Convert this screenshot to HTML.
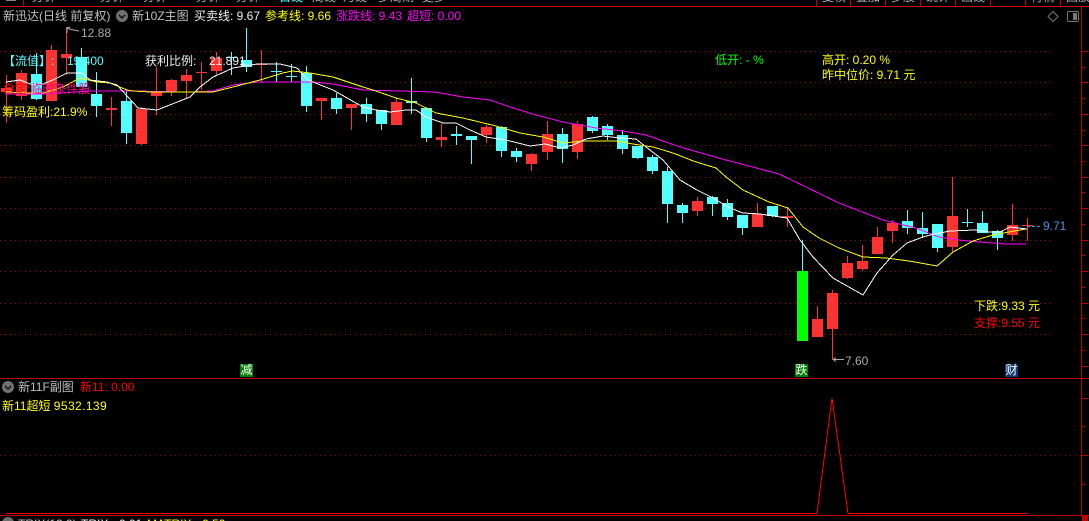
<!DOCTYPE html>
<html><head><meta charset="utf-8"><style>
html,body{margin:0;padding:0;background:#000}
#r{position:relative;width:1089px;height:521px;overflow:hidden;background:#000;font:12px/14px "Liberation Sans","WenQuanYi Zen Hei","Noto Sans CJK SC",sans-serif}
#r svg{position:absolute;left:0;top:0}
.t{position:absolute;white-space:pre;color:#c0c0c0}
.y{color:#ff0}.w{color:#eee}.m{color:#f0f}.c{color:#5ff}.r{color:#f00}.g{color:#0f0}.a{color:#aaa;top:-10px}
.b{position:absolute;width:13px;height:13px;top:364px;color:#fff;text-align:center;line-height:13px}
</style></head><body><div id="r">
<svg width="1089" height="521" viewBox="0 0 1089 521">
<g shape-rendering="crispEdges">
<path d="M0 51.5H1055M0 82.5H1055M0 114.5H1055M0 145.5H1055M0 177.5H1055M0 208.5H1055M0 240.5H1055M0 271.5H1055M0 303.5H1055M0 334.5H1055" stroke="#a01010" stroke-width="1" stroke-dasharray="1 4" fill="none"/>
<path d="M0 455.5H1081" stroke="#801010" stroke-dasharray="1 4" fill="none"/>
<path fill="#ff3232" d="M6 75h1V123h-1zM1 88h11V92H1zM21 70h1V100h-1zM16 73h11V96H16zM51 45h1V101h-1zM46 50h11V101H46zM66 28h1V75h-1zM61 54h11V58H61zM111 97h1V126h-1zM106 108h11V110H106zM141 107h1V145h-1zM136 109h11V144H136zM156 67h1V115h-1zM151 91h11V96H151zM171 79h1V96h-1zM166 80h11V91H166zM186 69h1V98h-1zM181 75h11V81H181zM201 62h1V90h-1zM196 72h11V73H196zM216 52h1V76h-1zM211 58h11V71H211zM261 50h1V82h-1zM256 64h11V65H256zM321 98h1V120h-1zM316 98h11V101H316zM351 104h1V130h-1zM346 104h11V108H346zM396 98h1V125h-1zM391 102h11V125H391zM441 124h1V147h-1zM436 137h11V140H436zM486 125h1V143h-1zM481 127h11V135H481zM531 153h1V171h-1zM526 154h11V164H526zM547 121h1V160h-1zM542 134h11V152H542zM577 121h1V159h-1zM572 124h11V152H572zM697 197h1V216h-1zM692 201h11V211H692zM757 203h1V227h-1zM752 214h11V227H752zM787 208h1V227h-1zM782 216h11V218H782zM817 306h1V337h-1zM812 319h11V337H812zM832 290h1V360h-1zM827 293h11V329H827zM847 256h1V279h-1zM842 263h11V278H842zM862 245h1V271h-1zM857 261h11V269H857zM877 227h1V254h-1zM872 237h11V254H872zM892 220h1V243h-1zM887 223h11V231H887zM952 177h1V253h-1zM947 216h11V247H947zM1012 204h1V241h-1zM1007 225h11V235H1007zM1027 218h1V241h-1zM1022 225h11V226H1022z"/>
<path fill="#54ffff" d="M36 53h1V100h-1zM31 74h11V99H31zM81 48h1V87h-1zM76 57h11V87H76zM96 72h1V117h-1zM91 94h11V106H91zM126 90h1V144h-1zM121 101h11V133H121zM231 52h1V75h-1zM226 57h11V58H226zM246 28h1V72h-1zM241 60h11V67H241zM276 62h1V82h-1zM271 71h11V72H271zM291 64h1V82h-1zM286 76h11V77H286zM306 66h1V112h-1zM301 73h11V106H301zM336 93h1V114h-1zM331 98h11V109H331zM366 98h1V122h-1zM361 104h11V114H361zM381 110h1V130h-1zM376 110h11V124H376zM411 78h1V114h-1zM406 101h11V103H406zM426 107h1V142h-1zM421 108h11V138H421zM456 126h1V145h-1zM451 134h11V136H451zM471 136h1V164h-1zM466 136h11V140H466zM501 126h1V157h-1zM496 127h11V151H496zM516 148h1V162h-1zM511 151h11V157H511zM562 128h1V163h-1zM557 134h11V149H557zM592 116h1V133h-1zM587 117h11V131H587zM607 124h1V140h-1zM602 126h11V135H602zM622 130h1V154h-1zM617 135h11V149H617zM637 146h1V159h-1zM632 146h11V158H632zM652 155h1V174h-1zM647 157h11V171H647zM667 167h1V223h-1zM662 171h11V204H662zM682 203h1V223h-1zM677 205h11V213H677zM712 196h1V216h-1zM707 197h11V204H707zM727 199h1V220h-1zM722 203h11V217H722zM742 215h1V235h-1zM737 215h11V228H737zM772 206h1V217h-1zM767 206h11V216H767zM907 210h1V234h-1zM902 221h11V228H902zM922 212h1V238h-1zM917 228h11V234H917zM937 224h1V252h-1zM932 224h11V248H932zM967 209h1V227h-1zM962 222h11V223H962zM982 211h1V233h-1zM977 223h11V233H977zM997 230h1V250h-1zM992 231h11V238H992zM802 240h1V271h-1z"/>
<rect x="797" y="271" width="11" height="70" fill="#0f0"/>
<polyline fill="none" stroke="#f0f" points="6,94 43,94 90,91 133,91 190,92 213,91 233,85 257,82 293,82 313,82 333,84 363,90 435,92 463,97 490,100 513,108 536,115 563,122 596,128 623,131 646,135 680,147 726,160 779,174 806,187 839,203 883,220 916,228 939,237 959,240 979,242 1006,244 1026,244"/>
<polyline fill="none" stroke="#ff0" points="6,92 30,93 43,93 63,87 80,78 97,82 110,83 127,90 133,91 150,92 213,92 233,87 260,80 283,73 292,71 310,73 333,77 363,87 373,90 396,98 416,103 436,113 463,118 496,126 520,133 543,137 563,143 583,141 616,141 633,144 653,147 673,153 696,162 716,168 726,177 743,190 769,202 788,208 803,227 819,238 839,248 863,257 886,258 909,261 937,266 953,252 973,241 993,235 1009,232 1026,229"/>
<polyline fill="none" stroke="#fff" points="6,82 20,80 33,85 43,84 55,79 67,73 82,73 90,80 107,82 117,85 128,97 138,108 157,110 190,97 200,87 213,77 233,68 257,64 280,64 297,68 308,80 333,90 363,107 376,110 390,112 406,110 416,110 426,117 443,123 456,123 470,130 486,137 506,140 530,146 545,144 560,148 573,145 586,139 603,136 620,138 636,139 646,147 663,160 680,180 697,190 713,198 730,208 743,213 760,214 780,217 787,218 800,240 813,257 833,278 863,295 877,273 893,255 907,243 923,237 930,235 950,231 975,230 990,232 1000,232 1010,227 1027,229"/>
<path fill="#c00000" d="M0 6h1089v1H0zM0 378h1089v1H0zM0 515h1089v1H0zM1081 7h1V515h-1z"/>
<path fill="#c00000" d="M23 0h1v6h-1zM816 0h1v6h-1zM850 0h1v6h-1zM885 0h1v6h-1zM920 0h1v6h-1zM955 0h1v6h-1zM990 0h1v6h-1zM1025 0h1v6h-1zM1060 0h1v6h-1z"/>
<path fill="#888" d="M6 0h10v1H6z"/>
<path fill="#c00000" d="M1082 51h6v1h-6zM1082 82h6v1h-6zM1082 114h6v1h-6zM1082 145h6v1h-6zM1082 177h6v1h-6zM1082 208h6v1h-6zM1082 240h6v1h-6zM1082 271h6v1h-6zM1082 303h6v1h-6zM1082 334h6v1h-6zM1082 67h3v1h-3zM1082 98h3v1h-3zM1082 130h3v1h-3zM1082 161h3v1h-3zM1082 192h3v1h-3zM1082 224h3v1h-3zM1082 255h3v1h-3zM1082 287h3v1h-3zM1082 318h3v1h-3zM1082 350h3v1h-3zM1082 366h6v1h-6zM1082 398h6v1h-6zM1082 455h6v1h-6zM1082 426h3v1h-3zM1082 484h3v1h-3zM1082 515h6v6h-6z"/>
<path d="M6 513.5H817L832 398L848 513.5H1027" fill="none" stroke="#f00" stroke-width="1"/>
<path d="M1027 226.5H1042" stroke="#4a90e2" stroke-dasharray="3 2" fill="none"/>
</g>
<path d="M67 27v6M67 28l3-1M67 28l3 1M69 29l10 2" stroke="#aaa" fill="none" stroke-width="1"/>
<path d="M833 359.500H844M833 359.500l3-2M833 359.500l3 2" stroke="#aaa" fill="none"/>
<circle cx="122" cy="16" r="6" fill="#707070"/><path d="M119 15l3 3 3-3" stroke="#111" stroke-width="1.500" fill="none"/>
<circle cx="8" cy="387" r="6" fill="#707070"/><path d="M5 386l3 3 3-3" stroke="#111" stroke-width="1.500" fill="none"/>
<circle cx="8" cy="523" r="6" fill="#707070"/>
<path d="M1053 11.500l5 5-5 5-5-5z" fill="none" stroke="#777"/>
<rect x="1067.500" y="11.500" width="11" height="10" rx="1.500" fill="none" stroke="#777"/><rect x="1073" y="13" width="4" height="7" fill="#777"/>
</svg>
<div class="t a" style="left:32px">分钟</div>
<div class="t a" style="left:100px">分钟</div>
<div class="t a" style="left:143px">分钟</div>
<div class="t a" style="left:196px">分钟</div>
<div class="t a" style="left:236px">分钟</div>
<div class="t c" style="left:279px;top:-10px">日线</div>
<div class="t a" style="left:312px">周线</div>
<div class="t a" style="left:343px">月线</div>
<div class="t a" style="left:378px">多周期</div>
<div class="t a" style="left:422px">更多</div>
<div class="t a" style="left:822px">复权</div>
<div class="t a" style="left:856px">叠加</div>
<div class="t a" style="left:891px">多股</div>
<div class="t a" style="left:926px">统计</div>
<div class="t a" style="left:961px">画线</div>
<div class="t a" style="left:1031px">行情</div>
<div class="t a" style="left:1066px">回放</div>
<div class="t" style="left:3px;top:9px">新迅达(日线 前复权)</div>
<div class="t" style="left:132px;top:9px">新10Z主图</div>
<div class="t w" style="left:194px;top:9px">买卖线: 9.67</div>
<div class="t y" style="left:265px;top:9px">参考线: 9.66</div>
<div class="t m" style="left:336px;top:9px">涨跌线: 9.43</div>
<div class="t m" style="left:407px;top:9px">超短: 0.00</div>
<div class="t" style="left:81px;top:26px;color:#aaa">12.88</div>
<div class="t c" style="left:3px;top:54px">【流值】:</div>
<div class="t c" style="left:67px;top:54px">19.400</div>
<div class="t w" style="left:145px;top:54px">获利比例:</div>
<div class="t w" style="left:209px;top:54px">21.891</div>
<div class="t g" style="left:715px;top:53px">低开: - %</div>
<div class="t y" style="left:822px;top:53px">高开: 0.20 %</div>
<div class="t y" style="left:822px;top:68px">昨中位价: 9.71 元</div>
<div class="t" style="left:3px;top:82px;color:#f00">自定:<span style="color:#ff0090">临时条件股</span></div>
<div class="t y" style="left:2px;top:105px">筹码盈利:21.9%</div>
<div class="t" style="left:1043px;top:219px;color:#4a90e2">9.71</div>
<div class="t y" style="left:974px;top:299px">下跌:9.33 元</div>
<div class="t r" style="left:974px;top:316px">支撑:9.55 元</div>
<div class="t" style="left:845px;top:354px;color:#aaa">7.60</div>
<div class="b" style="left:240px;background:#008000">减</div>
<div class="b" style="left:795px;background:#008000">跌</div>
<div class="b" style="left:1005px;background:#0a3a6e">财</div>
<div class="t" style="left:18px;top:380px">新11F副图</div>
<div class="t r" style="left:80px;top:380px">新11: 0.00</div>
<div class="t y" style="left:2px;top:399px">新11超短 <span style="letter-spacing:.4px">9532.139</span></div>
<div class="t" style="left:18px;top:517px">TRIX(12,9)</div>
<div class="t w" style="left:81px;top:517px">TRIX: -0.01</div>
<div class="t y" style="left:147px;top:517px">MATRIX: -0.50</div>
</div></body></html>
